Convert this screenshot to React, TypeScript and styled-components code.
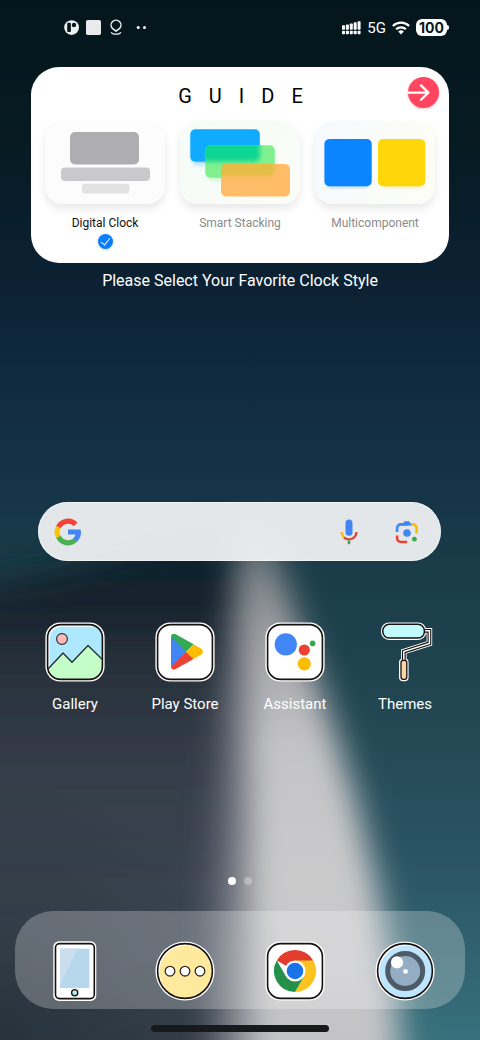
import React from "react";
import styled, { createGlobalStyle } from "styled-components";

const GlobalStyle = createGlobalStyle`
  *, *::before, *::after { box-sizing: border-box; }
  body { margin: 0; background: #04161c; }
  button, input { font: inherit; }
`;

const Screen = styled.main`
  position: relative;
  isolation: isolate;
  overflow: hidden;
  display: flex;
  flex-direction: column;
  min-height: 100vh;
  padding-bottom: 8px;
  font-family: Roboto, "Liberation Sans", sans-serif;
  color: #fff;
`;

const WallpaperArt = styled.svg`
  position: absolute;
  inset: 0;
  z-index: -1;
  width: 100%;
  height: 100%;
`;

const StatusBar = styled.header`
  display: flex;
  align-items: center;
  justify-content: space-between;
  height: 19px;
  margin: 18px 31px 30px 64px;
`;

const StatusGroup = styled.div<{ $gap: number }>`
  display: flex;
  align-items: center;
  gap: ${(p) => p.$gap}px;
`;

const Network = styled.span`
  font-size: 15px;
  line-height: 18px;
`;

const Battery = styled.span`
  display: flex;
  align-items: center;
`;

const BatteryLevel = styled.span`
  width: 31px;
  height: 17px;
  border-radius: 6px;
  background: #fff;
  color: #06181e;
  font: 700 14px/17px Inter, sans-serif;
  text-align: center;
`;

const BatteryTip = styled.span`
  width: 2px;
  height: 5px;
  border-radius: 0 2px 2px 0;
  background: #fff;
`;

const GuideCard = styled.section`
  margin: 0 31px;
  padding: 10px 10px 14px;
  border-radius: 28px;
  background: #fff;
  color: #111;
`;

const GuideHeader = styled.div`
  display: grid;
  grid-template-columns: 1fr auto 1fr;
  align-items: end;
`;

const GuideTitle = styled.h1`
  grid-column: 2;
  margin: 0;
  padding-left: 18px;
  font-size: 20px;
  font-weight: 400;
  line-height: 24px;
  letter-spacing: 17px;
  color: #000;
`;

const NextButton = styled.button`
  justify-self: end;
  width: 31px;
  height: 31px;
  padding: 0;
  border: 0;
  border-radius: 50%;
  background: #ff4560;
  box-shadow: 0 1px 3px rgba(255, 69, 96, 0.3);
  svg { display: block; }
`;

const StyleOptions = styled.div`
  display: grid;
  grid-template-columns: repeat(3, 1fr);
  gap: 15px;
  margin: 13px 4px 0;
`;

const StyleOption = styled.label`
  display: flex;
  flex-direction: column;
  align-items: center;
`;

const StylePreview = styled.span<{ $tint: string }>`
  display: flex;
  justify-content: center;
  width: 100%;
  height: 83px;
  border-radius: 18px;
  background: ${(p) => p.$tint};
  box-shadow: 0 5px 8px rgba(0, 0, 0, 0.09);
`;

const StyleName = styled.span<{ $active: boolean }>`
  margin-top: 11px;
  font-size: 12px;
  line-height: 16px;
  color: ${(p) => (p.$active ? "#111" : "#8b8b8b")};
`;

const StyleRadio = styled.input`
  appearance: none;
  display: grid;
  place-items: center;
  width: 15px;
  height: 15px;
  margin: 3px 0 0;
  border-radius: 50%;
  &:checked {
    background: #0a7cff;
    box-shadow: 0 1px 3px rgba(0, 0, 0, 0.2);
  }
  &:checked::after {
    content: "";
    width: 5px;
    height: 9px;
    margin-bottom: 2px;
    border: solid #fff;
    border-width: 0 1px 1px 0;
    transform: rotate(38deg);
  }
`;

const Tagline = styled.p`
  margin: 8px 0 24px;
  font-size: 16px;
  line-height: 20px;
  text-align: center;
`;

const SearchBar = styled.form`
  display: flex;
  align-items: center;
  height: 59px;
  margin: auto 39px 0 38px;
  padding: 0 21px 0 16px;
  border-radius: 30px;
  background: rgba(240, 242, 244, 0.94);
  box-shadow: inset 0 0 1px 1px rgba(255, 255, 255, 0.5);
`;

const SearchInput = styled.input`
  flex: 1;
  min-width: 0;
  margin: 0 16px;
  border: 0;
  outline: 0;
  background: transparent;
  color: #222;
  font-size: 16px;
`;

const SearchAction = styled.button`
  display: grid;
  place-items: center;
  width: 26px;
  height: 28px;
  padding: 0;
  border: 0;
  background: transparent;
  & + & { margin-left: 32px; }
`;

const AppRow = styled.nav`
  display: grid;
  grid-template-columns: repeat(4, 1fr);
  margin: 61px 20px 0;
`;

const AppLink = styled.a`
  display: flex;
  flex-direction: column;
  align-items: center;
  color: #fff;
  text-decoration: none;
`;

const AppName = styled.span`
  margin-top: 12px;
  font-size: 15px;
  line-height: 20px;
`;

const PageDots = styled.div`
  display: flex;
  justify-content: center;
  gap: 8px;
  margin-top: 163px;
`;

const PageDot = styled.span<{ $current?: boolean }>`
  width: 8px;
  height: 8px;
  border-radius: 50%;
  background: ${(p) => (p.$current ? "#fff" : "rgba(255, 255, 255, 0.3)")};
`;

const Dock = styled.nav`
  display: grid;
  grid-template-columns: repeat(4, 1fr);
  margin: 26px 15px 0;
  padding: 30px 5px 8px;
  border-radius: 38px;
  background: rgba(255, 255, 255, 0.25);
`;

const HomeIndicator = styled.div`
  width: 37%;
  height: 7px;
  margin: 16px auto 0;
  border-radius: 4px;
  background: #17191b;
`;

function Wallpaper() {
  return (
    <WallpaperArt viewBox="0 0 480 1040" preserveAspectRatio="none" aria-hidden="true">
      <defs>
        <linearGradient id="sky" x1="0" y1="0" x2="0" y2="1">
          <stop offset="0" stopColor="#04161b" />
          <stop offset="0.14" stopColor="#071b23" />
          <stop offset="0.28" stopColor="#0c2234" />
          <stop offset="0.38" stopColor="#112b40" />
          <stop offset="0.47" stopColor="#153447" />
          <stop offset="0.54" stopColor="#193c48" />
          <stop offset="0.65" stopColor="#20444f" />
          <stop offset="0.82" stopColor="#2a5361" />
          <stop offset="1" stopColor="#37707c" />
        </linearGradient>
        <linearGradient id="hill" gradientUnits="userSpaceOnUse" x1="0" y1="540" x2="0" y2="1040">
          <stop offset="0" stopColor="#0b1f2e" />
          <stop offset="0.12" stopColor="#15222c" />
          <stop offset="0.25" stopColor="#28313b" />
          <stop offset="0.5" stopColor="#363f4b" />
          <stop offset="0.8" stopColor="#3d4754" />
          <stop offset="1" stopColor="#38414c" />
        </linearGradient>
        <linearGradient id="halo" gradientUnits="userSpaceOnUse" x1="0" y1="560" x2="0" y2="1040">
          <stop offset="0" stopColor="#4d5a64" stopOpacity="0" />
          <stop offset="0.3" stopColor="#6d717b" stopOpacity="0.7" />
          <stop offset="1" stopColor="#7b7e87" />
        </linearGradient>
        <linearGradient id="beam" gradientUnits="userSpaceOnUse" x1="0" y1="500" x2="0" y2="1040">
          <stop offset="0" stopColor="#5d6a72" stopOpacity="0.2" />
          <stop offset="0.12" stopColor="#82888d" stopOpacity="0.95" />
          <stop offset="0.27" stopColor="#a5a5a9" />
          <stop offset="0.45" stopColor="#c4c4c7" />
          <stop offset="0.7" stopColor="#cacacc" />
          <stop offset="1" stopColor="#c4c4c8" />
        </linearGradient>
        <radialGradient id="shade" gradientUnits="userSpaceOnUse" cx="0" cy="1040" r="260">
          <stop offset="0" stopColor="#1c2a31" stopOpacity="0.6" />
          <stop offset="1" stopColor="#1c2a31" stopOpacity="0" />
        </radialGradient>
        <filter id="soft" filterUnits="userSpaceOnUse" x="-160" y="400" width="740" height="860">
          <feGaussianBlur stdDeviation="18" />
        </filter>
        <filter id="softBeam" filterUnits="userSpaceOnUse" x="60" y="400" width="520" height="860">
          <feGaussianBlur stdDeviation="16" />
        </filter>
      </defs>
      <rect width="480" height="1040" fill="url(#sky)" />
      <path d="M-120 610 L60 568 L150 540 L250 532 L320 800 L380 1180 L-120 1180Z" fill="url(#hill)" filter="url(#soft)" />
      <rect y="780" width="260" height="260" fill="url(#shade)" />
      <path
        d="M240 540 L270 540 L300 760 L320 1180 L216 1180 L214 900 L219 700Z"
        fill="url(#halo)"
        filter="url(#softBeam)"
      />
      <path
        d="M238 524 L268 524 L302 635 L328 710 L356 800 L378 890 L397 1000 L410 1180 L250 1180 L248 900 L248 800 L244 700 L235 620Z"
        fill="url(#beam)"
        filter="url(#softBeam)"
      />
    </WallpaperArt>
  );
}

function StatusBadges() {
  return (
    <svg width="84" height="17" viewBox="64 19 84 17" aria-hidden="true">
      <circle cx="71.6" cy="27.6" r="7.4" fill="#eef1f2" />
      <rect x="67.2" y="22.8" width="3.7" height="9.2" rx="1" fill="#06181e" />
      <circle cx="74" cy="25" r="2.2" fill="#06181e" />
      <rect x="86" y="20" width="15" height="15" rx="1.8" fill="#e8eaec" />
      <path
        d="M116 31.2 L112.4 28.4 A4.9 4.9 0 1 1 119.6 28.4Z"
        fill="none" stroke="#eef1f2" strokeWidth="1.5" strokeLinejoin="round"
      />
      <path d="M111.3 32.2 Q112 34.2 116 34.2 Q120 34.2 120.8 32.2" fill="none" stroke="#eef1f2" strokeWidth="1.3" />
      <circle cx="138.2" cy="27.6" r="1.5" fill="#fff" />
      <circle cx="144.5" cy="27.6" r="1.5" fill="#fff" />
    </svg>
  );
}

function SignalIcon() {
  const tops = [4.2, 3.4, 2.4, 1.3, 0.2];
  return (
    <svg width="19" height="14" viewBox="0 0 19 14" aria-hidden="true" fill="#fff">
      {tops.map((top, i) => (
        <React.Fragment key={top}>
          <rect x={i * 3.9} y={top} width="3" height={8.8 - top} rx="0.8" />
          <rect x={i * 3.9} y="9.8" width="3" height="3.4" rx="0.8" />
        </React.Fragment>
      ))}
    </svg>
  );
}

function WifiIcon() {
  return (
    <svg width="18" height="14" viewBox="0 0 18 14" aria-hidden="true">
      <g fill="none" stroke="#fff" strokeWidth="2.3">
        <path d="M0.9 5 A11.6 11.6 0 0 1 17.1 5" />
        <path d="M4.1 8.3 A7 7 0 0 1 13.9 8.3" />
      </g>
      <path d="M9 13.4 L6.2 10.6 A4 4 0 0 1 11.8 10.6Z" fill="#fff" />
    </svg>
  );
}

function DigitalArt() {
  return (
    <svg width="120" height="83" viewBox="0 0 120 83" aria-hidden="true">
      <rect x="25" y="11" width="69" height="32.5" rx="5" fill="#aeadb2" />
      <rect x="16" y="46.5" width="89" height="13.5" rx="4" fill="#c9c9cb" />
      <rect x="37" y="62.7" width="47.5" height="9.7" rx="3" fill="#e2e2e2" />
    </svg>
  );
}

function StackingArt() {
  return (
    <svg width="120" height="83" viewBox="0 0 120 83" aria-hidden="true">
      <defs>
        <clipPath id="greenPane"><rect x="25.3" y="24.3" width="69.5" height="32.5" rx="5" /></clipPath>
        <clipPath id="orangePane"><rect x="41" y="43" width="69" height="32.5" rx="5" /></clipPath>
        <filter id="paneBlur" x="-20%" y="-30%" width="140%" height="160%"><feGaussianBlur stdDeviation="2.2" /></filter>
      </defs>
      <rect x="12" y="13" width="66" height="31" rx="5" fill="#10adff" opacity="0.35" filter="url(#paneBlur)" />
      <rect x="10.3" y="8.2" width="69.5" height="32.5" rx="5" fill="#10abff" />
      <rect x="27" y="29" width="66" height="30" rx="5" fill="#7bea8c" opacity="0.4" filter="url(#paneBlur)" />
      <rect x="25.3" y="24.3" width="69.5" height="32.5" rx="5" fill="#81f08f" />
      <g clipPath="url(#greenPane)">
        <rect x="4" y="2" width="75.8" height="38.5" rx="5" fill="#0ad692" filter="url(#paneBlur)" />
      </g>
      <rect x="41" y="43" width="69" height="32.5" rx="5" fill="#ffbc69" />
      <g clipPath="url(#orangePane)">
        <rect x="25" y="24" width="69.8" height="31" rx="5" fill="#e3bd44" filter="url(#paneBlur)" />
      </g>
    </svg>
  );
}

function MultiArt() {
  return (
    <svg width="120" height="83" viewBox="0 0 120 83" aria-hidden="true">
      <defs>
        <filter id="glow" x="-20%" y="-20%" width="140%" height="140%"><feGaussianBlur stdDeviation="1.5" /></filter>
      </defs>
      <rect x="11" y="20" width="44" height="46.5" rx="5" fill="#0a84ff" opacity="0.35" filter="url(#glow)" />
      <rect x="64.5" y="20" width="44" height="46.5" rx="5" fill="#ffd60a" opacity="0.35" filter="url(#glow)" />
      <rect x="9.4" y="18" width="47.3" height="47.3" rx="5" fill="#0a84ff" />
      <rect x="63" y="18" width="47.3" height="47.3" rx="5" fill="#ffd60a" />
    </svg>
  );
}

function GoogleLogo() {
  return (
    <svg width="28" height="28" viewBox="0 0 28 28" aria-hidden="true">
      <g fill="none" strokeWidth="5.2">
        <path d="M4.37 9.2 A10.8 10.8 0 0 1 21.6 6.3" stroke="#f44336" />
        <path d="M4.5 19 A10.8 10.8 0 0 1 4.37 9.1" stroke="#ffc107" />
        <path d="M21.4 21.9 A10.8 10.8 0 0 1 4.5 18.9" stroke="#4caf50" />
        <path d="M24.2 14 A10.8 10.8 0 0 1 21.3 22" stroke="#4285f4" />
      </g>
      <path d="M14 11.6H26.6Q27 13.4 26.7 16.4H14Z" fill="#4285f4" />
    </svg>
  );
}

function MicIcon() {
  return (
    <svg width="18" height="26" viewBox="0 0 18 26" aria-hidden="true">
      <rect x="5.5" y="0.5" width="7" height="16.3" rx="3.5" fill="#4285f4" />
      <path d="M1.6 13 A7.5 7.5 0 0 0 3.8 18.3" fill="none" stroke="#fbbc04" strokeWidth="2.3" />
      <path d="M3.8 18.3 A7.5 7.5 0 0 0 16.4 13" fill="none" stroke="#ea4335" strokeWidth="2.3" />
      <path d="M9 21.4V25.2" stroke="#34a853" strokeWidth="2.4" />
    </svg>
  );
}

function LensIcon() {
  return (
    <svg width="24" height="24" viewBox="0 0 24 24" aria-hidden="true">
      <g fill="none" strokeWidth="2.6">
        <path d="M2.1 12V8.2A3.8 3.8 0 0 1 5.9 4.4H13" stroke="#4285f4" />
        <path d="M15.6 4.4H17.8A3.8 3.8 0 0 1 21.6 8.2V13.4" stroke="#fbbc04" />
        <path d="M2.1 15.4V18.2A3.8 3.8 0 0 0 5.9 22H12.2" stroke="#ea4335" />
      </g>
      <path d="M7 5.6L8.6 2.2Q9 1.3 10 1.3H13.6Q14.6 1.3 15 2.2L16.6 5.6Z" fill="#4285f4" />
      <circle cx="12" cy="13" r="3.8" fill="#4285f4" />
      <circle cx="19.4" cy="19.2" r="2.4" fill="#34a853" />
    </svg>
  );
}

function IconFrame({ children, fill = "#fff" }: { children: React.ReactNode; fill?: string }) {
  return (
    <svg width="60" height="60" viewBox="0 0 60 60" aria-hidden="true">
      <rect x="0.4" y="0.4" width="59.2" height="59.2" rx="15" fill="#fff" />
      <rect x="2.6" y="2.6" width="54.8" height="54.8" rx="13" fill={fill} />
      {children}
      <rect x="2.6" y="2.6" width="54.8" height="54.8" rx="13" fill="none" stroke="#15110f" strokeWidth="1.6" />
    </svg>
  );
}

function GalleryIcon() {
  return (
    <IconFrame>
      <defs><clipPath id="photo"><rect x="3" y="3" width="54" height="54" rx="12.5" /></clipPath></defs>
      <g clipPath="url(#photo)">
        <rect x="4.6" y="4.8" width="60" height="60" rx="12" fill="#aee8fe" />
        <path d="M3 47L18 31L27 40.3L43 23.5L58 38V58H3Z" fill="#c5fdc9" stroke="#22292b" strokeWidth="1.3" strokeLinejoin="round" />
      </g>
      <circle cx="17" cy="17" r="5.4" fill="#ffb9ba" stroke="#33302f" strokeWidth="1.2" />
    </IconFrame>
  );
}

function PlayStoreIcon() {
  return (
    <IconFrame>
      <path d="M16 14V45L31.5 29.6Z" fill="#4285f4" />
      <path d="M16 14.8Q16 12.8 17.6 12Q19.2 11.3 20.8 12.3L38.6 22.3L31 30Z" fill="#34a853" />
      <path d="M16 44.5Q16 46.6 17.6 47.2Q19.2 47.8 20.8 46.9L38.6 37L31 29.4Z" fill="#ea4335" />
      <path d="M38.4 22.2L46 26.6Q48 27.8 48 29.7Q48 31.6 46 32.7L38.4 37.1L30.8 29.7Z" fill="#fbbc04" />
    </IconFrame>
  );
}

function AssistantIcon() {
  return (
    <IconFrame>
      <circle cx="20.8" cy="22.4" r="11.1" fill="#4285f4" />
      <circle cx="39.3" cy="28" r="5.6" fill="#ea4335" />
      <circle cx="39.3" cy="41.8" r="6.6" fill="#fbbc04" />
      <circle cx="47.6" cy="21.4" r="2.8" fill="#34a853" />
    </IconFrame>
  );
}

function ThemesIcon() {
  const arm = "M50 8.8H54.4V21.4L28.8 29.6V38";
  return (
    <svg width="60" height="60" viewBox="0 0 60 60" aria-hidden="true">
      <g fill="none">
        <path d={arm} stroke="#fff" strokeWidth="5.6" />
        <rect x="6" y="0.5" width="45.2" height="17.4" rx="8" fill="#fff" />
        <rect x="24" y="36.5" width="9.6" height="22.8" rx="4" fill="#fff" />
        <path d={arm} stroke="#15110f" strokeWidth="3.8" />
        <path d={arm} stroke="#fff" strokeWidth="1.5" />
        <rect x="7.8" y="2.3" width="41.6" height="13.8" rx="6.4" fill="#c2fbfb" stroke="#15110f" strokeWidth="1.5" />
        <rect x="26" y="38.3" width="5.8" height="19" rx="2.2" fill="#fbd5a8" stroke="#15110f" strokeWidth="1.3" />
      </g>
    </svg>
  );
}

function PhoneIcon() {
  return (
    <svg width="60" height="60" viewBox="0 0 60 60" aria-hidden="true">
      <rect x="8.3" y="0.3" width="43" height="59.6" rx="5.5" fill="#fff" />
      <rect x="10.5" y="2.6" width="38.8" height="55" rx="4" fill="#fff" stroke="#15110f" strokeWidth="1.6" />
      <rect x="15" y="7.6" width="29.4" height="39.4" fill="#b7d7ec" />
      <path d="M15 7.6H32.5L16.5 42L15 44Z" fill="#cadeee" />
      <circle cx="29.7" cy="51.7" r="3.1" fill="#b6e5f5" stroke="#15110f" strokeWidth="1.3" />
    </svg>
  );
}

function MessagesIcon() {
  return (
    <svg width="60" height="60" viewBox="0 0 60 60" aria-hidden="true">
      <circle cx="30" cy="30" r="29.6" fill="#fff" />
      <circle cx="30.7" cy="30.9" r="26.3" fill="#ffe99c" />
      <circle cx="30" cy="30" r="27.4" fill="none" stroke="#15110f" strokeWidth="1.6" />
      {[15, 30, 45].map((x) => (
        <circle key={x} cx={x} cy="30.2" r="4.8" fill="#fff" stroke="#2b2622" strokeWidth="1.3" />
      ))}
    </svg>
  );
}

function ChromeIcon() {
  return (
    <IconFrame>
      <path d="M30 30L11.8 19.5A21 21 0 0 1 48.2 19.5Z" fill="#e33b2e" />
      <path d="M30 19.5H48.2A21 21 0 0 1 30 51L39.1 35.2Z" fill="#fcc31e" />
      <path d="M20.9 35.2L11.8 19.5A21 21 0 0 0 30 51L39.1 35.2L30 40Z" fill="#23914a" />
      <circle cx="30" cy="30" r="10.5" fill="#fff" />
      <circle cx="30" cy="30" r="8.3" fill="#1a73e8" />
    </IconFrame>
  );
}

function CameraIcon() {
  return (
    <svg width="60" height="60" viewBox="0 0 60 60" aria-hidden="true">
      <circle cx="30" cy="30" r="29.6" fill="#fff" />
      <circle cx="30.8" cy="30.8" r="26.4" fill="#bfe4fd" />
      <circle cx="30" cy="30" r="27.4" fill="none" stroke="#15110f" strokeWidth="1.6" />
      <circle cx="30.2" cy="30" r="17.5" fill="#94adc2" stroke="#4b5b68" strokeWidth="5" />
      <circle cx="22" cy="21.4" r="6.1" fill="#fff" />
      <circle cx="30.5" cy="30.4" r="2.4" fill="#fff" />
    </svg>
  );
}

const clockStyles = [
  { name: "Digital Clock", tint: "#fcfcfc", art: <DigitalArt /> },
  { name: "Smart Stacking", tint: "linear-gradient(135deg, #f5fcf9, #fbfcf6)", art: <StackingArt /> },
  { name: "Multicomponent", tint: "linear-gradient(100deg, #f6faff, #fdfdf5)", art: <MultiArt /> },
];

const homeApps = [
  { name: "Gallery", icon: <GalleryIcon /> },
  { name: "Play Store", icon: <PlayStoreIcon /> },
  { name: "Assistant", icon: <AssistantIcon /> },
  { name: "Themes", icon: <ThemesIcon /> },
];

const dockApps = [
  { name: "Phone", icon: <PhoneIcon /> },
  { name: "Messages", icon: <MessagesIcon /> },
  { name: "Chrome", icon: <ChromeIcon /> },
  { name: "Camera", icon: <CameraIcon /> },
];

export default function App() {
  const [selected, setSelected] = React.useState("Digital Clock");
  return (
    <Screen>
      <GlobalStyle />
      <Wallpaper />
      <StatusBar>
        <StatusBadges />
        <StatusGroup $gap={6}>
          <SignalIcon />
          <Network>5G</Network>
          <WifiIcon />
          <Battery>
            <BatteryLevel>100</BatteryLevel>
            <BatteryTip />
          </Battery>
        </StatusGroup>
      </StatusBar>

      <GuideCard>
        <GuideHeader>
          <GuideTitle>GUIDE</GuideTitle>
          <NextButton type="button" aria-label="Next">
            <svg width="31" height="31" viewBox="0 0 31 31" fill="none" stroke="#fff" strokeWidth="2.3" strokeLinecap="round" strokeLinejoin="round">
              <path d="M0.5 15.6H20M13 8.4L20.4 15.6L13 22.8" />
            </svg>
          </NextButton>
        </GuideHeader>
        <StyleOptions role="radiogroup" aria-label="Clock style">
          {clockStyles.map(({ name, tint, art }) => (
            <StyleOption key={name}>
              <StylePreview $tint={tint}>{art}</StylePreview>
              <StyleName $active={name === selected}>{name}</StyleName>
              <StyleRadio
                type="radio"
                name="clock-style"
                value={name}
                checked={name === selected}
                onChange={() => setSelected(name)}
              />
            </StyleOption>
          ))}
        </StyleOptions>
      </GuideCard>
      <Tagline>Please Select Your Favorite Clock Style</Tagline>

      <SearchBar role="search" onSubmit={(e) => e.preventDefault()}>
        <GoogleLogo />
        <SearchInput type="text" aria-label="Search" />
        <SearchAction type="button" aria-label="Voice search"><MicIcon /></SearchAction>
        <SearchAction type="button" aria-label="Lens"><LensIcon /></SearchAction>
      </SearchBar>

      <AppRow aria-label="Apps">
        {homeApps.map(({ name, icon }) => (
          <AppLink key={name} href="#">
            {icon}
            <AppName>{name}</AppName>
          </AppLink>
        ))}
      </AppRow>

      <PageDots>
        <PageDot $current />
        <PageDot />
      </PageDots>

      <Dock aria-label="Dock">
        {dockApps.map(({ name, icon }) => (
          <AppLink key={name} href="#" aria-label={name}>{icon}</AppLink>
        ))}
      </Dock>
      <HomeIndicator />
    </Screen>
  );
}
